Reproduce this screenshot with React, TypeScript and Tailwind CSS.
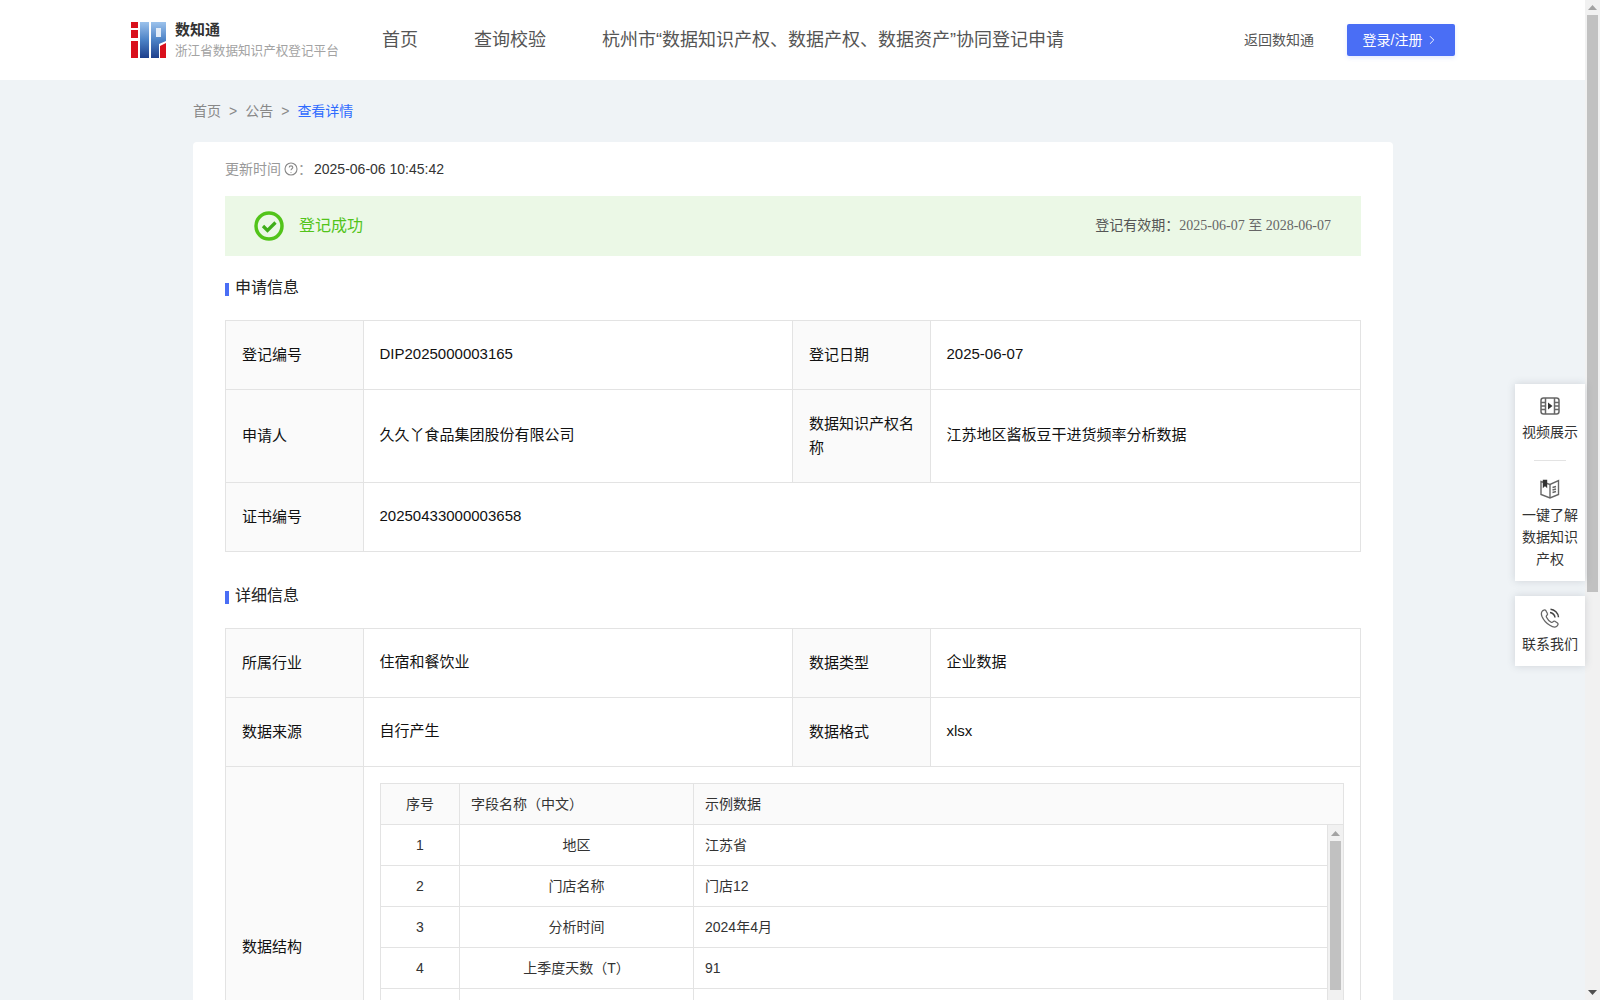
import type { ReactNode } from "react";
import { ChevronRight } from "lucide-react";

const font = "font-['Liberation_Sans','Noto_Sans_CJK_SC',sans-serif]";

function Logo() {
  return (
    <svg width="35" height="36" viewBox="0 0 35 36" className="shrink-0">
      <defs>
        <linearGradient id="logoBlue" x1="0" y1="0" x2="0" y2="1">
          <stop offset="0" stopColor="#9cc2ec" />
          <stop offset="0.5" stopColor="#4c82c6" />
          <stop offset="1" stopColor="#1d3f8c" />
        </linearGradient>
      </defs>
      <rect x="0" y="0" width="7" height="6" fill="#d9101c" />
      <rect x="0" y="8" width="7" height="8" fill="#d9101c" />
      <rect x="0" y="19" width="7" height="17" fill="#d9101c" />
      <rect x="9" y="0" width="9" height="36" fill="url(#logoBlue)" />
      <path d="M20 0h15v19l-7 3v14h-8z" fill="url(#logoBlue)" />
      <path d="M25 6h5v9h-5z" fill="#e2ecf8" />
      <path d="M29 36V24l6-3v15z" fill="#d9101c" />
    </svg>
  );
}

function SectionTitle({ children }: { children: string }) {
  return (
    <div className="flex items-center gap-[6px] text-base leading-[22px] text-[#222]">
      <span className="mt-[3px] h-[13px] w-1 bg-[#4a6ef5]" />
      <span className="mt-px">{children}</span>
    </div>
  );
}

function Label({ children }: { children: string }) {
  return (
    <div className="flex items-center border-r border-[#e3e3e3] bg-[#fafafa] px-4 pb-px text-[15px] leading-6 text-[#111]">
      {children}
    </div>
  );
}

function Value({ children }: { children: string }) {
  return (
    <div className="flex items-center border-r border-[#e3e3e3] px-[15.5px] pb-px text-[15px] text-[#111] last:border-r-0">
      {children}
    </div>
  );
}

const cols = "grid grid-cols-[138px_429px_138px_1fr]";

const fields = [
  ["1", "地区", "江苏省"],
  ["2", "门店名称", "门店12"],
  ["3", "分析时间", "2024年4月"],
  ["4", "上季度天数（T）", "91"],
  ["", "", ""],
];

function ScrollArrow({ up }: { up?: boolean }) {
  return (
    <svg width="9" height="5" viewBox="0 0 9 5" className={up ? "" : "rotate-180"}>
      <path d="M4.500 0 9 5H0z" fill={up ? "#a3a3a3" : "#505050"} />
    </svg>
  );
}

function SampleTable() {
  return (
    <div className="border border-[#e3e3e3] text-sm text-[#333]">
      <div className="grid h-[41px] grid-cols-[79px_234px_1fr] items-stretch border-b border-[#e3e3e3] bg-[#fafafa]">
        <div className="flex items-center justify-center border-r border-[#e3e3e3]">序号</div>
        <div className="flex items-center border-r border-[#e3e3e3] px-[11px]">字段名称（中文）</div>
        <div className="flex items-center px-[11px]">示例数据</div>
      </div>
      <div className="flex">
        <div className="min-w-0 flex-1">
          {fields.map((f, i) => (
            <div key={i} className="grid h-[41px] grid-cols-[79px_234px_1fr] border-b border-r border-[#e3e3e3]">
              <div className="flex items-center justify-center border-r border-[#e3e3e3]">{f[0]}</div>
              <div className="flex items-center justify-center border-r border-[#e3e3e3]">{f[1]}</div>
              <div className="flex items-center px-[11px]">{f[2]}</div>
            </div>
          ))}
        </div>
        <div className="flex w-[15px] shrink-0 flex-col items-center bg-[#f1f1f1]">
          <div className="flex h-[16px] items-center justify-center">
            <ScrollArrow up />
          </div>
          <div className="h-[149px] w-[11px] bg-[#c1c1c1]" />
        </div>
      </div>
    </div>
  );
}

function SideItem({ icon, children }: { icon: ReactNode; children: ReactNode }) {
  return (
    <div className="flex flex-col items-center text-sm leading-[22px] text-[#333]">
      {icon}
      <div className="mt-[5px] w-[58px] text-center">{children}</div>
    </div>
  );
}

function SideBar() {
  return (
    <div className="absolute left-[1515px] top-[384px] flex w-[70px] flex-col gap-[15px]">
      <div className="flex h-[197px] flex-col items-center bg-white pt-[12px] shadow-[0_0_8px_rgba(60,70,90,0.18)]">
        <SideItem
          icon={
            <svg width="20" height="20" viewBox="0 0 20 20" fill="none" stroke="#666" strokeWidth="1.5">
              <rect x="1" y="2" width="18" height="16" rx="2.500" />
              <path d="M5.500 2v16M14.500 2v16M1 6.500h4.500M1 10h4.500M1 13.500h4.500M14.500 6.500H19M14.500 10H19M14.500 13.500H19" />
              <path d="M8 6.500 12.500 10 8 13.500z" fill="#333" stroke="none" />
            </svg>
          }
        >
          视频展示
        </SideItem>
        <div className="mt-[17px] h-px w-8 bg-[#e3e3e3]" />
        <div className="mt-[18px]">
          <SideItem
            icon={
              <svg width="20" height="20" viewBox="0 0 20 20" fill="none" stroke="#666" strokeWidth="1.4">
                <path d="M1 2.500 10 5.500 18.500 1.500V15.500L10 19 1 15.500z" />
                <path d="M10 5.500V19" />
                <path d="M3.500 1.500h3v6L5 6 3.500 7.500z" fill="#333" stroke="#333" />
                <path d="M12.500 8.500l3.500-1M12.500 11l3.500-1M12.500 13.500l3.500-1" />
              </svg>
            }
          >
            一键了解数据知识产权
          </SideItem>
        </div>
      </div>
      <div className="flex h-[70px] flex-col items-center bg-white pt-[12px] shadow-[0_0_8px_rgba(60,70,90,0.18)]">
        <SideItem
          icon={
            <svg width="20" height="20" viewBox="0 0 20 20" fill="none" stroke="#666" strokeWidth="1.3">
              <path d="M2 3.500C3 2 5 1.500 5.800 2.500l1.600 3c.4.7 0 1.300-.7 1.900-.6.5-.6 1-.2 1.800 1 2 2.600 3.800 4.600 5 .7.400 1.300.300 1.800-.3.600-.7 1.300-1 2-.6l2.600 1.700c1 .7.500 2.500-1 3.500-1.500 1-4 .5-6.700-1.200C6.500 15.300 3.500 12 2 8.500 1.200 6.500 1.300 4.600 2 3.500z" />
              <path d="M10 4.500c2.500.2 4.800 2.500 5 5M10.500 1.200c4 .2 7.800 4 8 8" stroke="#444" strokeWidth="1.500" />
            </svg>
          }
        >
          联系我们
        </SideItem>
      </div>
    </div>
  );
}

function PageScrollbar() {
  return (
    <div className="flex w-[15px] shrink-0 flex-col items-center justify-between bg-[#f1f1f1]">
      <div className="flex w-full flex-col items-center">
        <div className="flex h-[15px] items-center justify-center">
          <ScrollArrow up />
        </div>
        <div className="h-[577px] w-[11px] bg-[#c1c1c1]" />
      </div>
      <div className="flex h-[15px] items-center justify-center">
        <ScrollArrow />
      </div>
    </div>
  );
}

export default function App() {
  return (
    <div className={`relative flex h-[1000px] w-[1600px] overflow-hidden bg-[#eff3f6] ${font}`}>
      <div className="min-w-0 flex-1">
        <header className="flex h-20 items-center bg-white pl-[131px] pr-[130px]">
          <Logo />
          <div className="ml-[9px] w-[207px] shrink-0">
            <div className="text-[15px] font-bold leading-5 text-[#333]">数知通</div>
            <div className="mt-px text-[12.6px] leading-5 text-[#a3a3a3]">浙江省数据知识产权登记平台</div>
          </div>
          <nav className="flex gap-14 text-lg text-[#555]">
            <span>首页</span>
            <span>查询校验</span>
            <span>杭州市“数据知识产权、数据产权、数据资产”协同登记申请</span>
          </nav>
          <div className="ml-auto flex items-center gap-[33px]">
            <span className="text-sm text-[#555]">返回数知通</span>
            <button
              type="button"
              className="flex h-8 w-[108px] items-center justify-center gap-[3px] rounded-[2px] bg-[#4a6ef5] text-sm text-white shadow-[0_2px_4px_rgba(74,110,245,0.15)]"
            >
              登录/注册
              <ChevronRight size={14} strokeWidth={1.6} />
            </button>
          </div>
        </header>

        <main className="ml-[193px] w-[1200px]">
          <div className="flex h-[62px] items-center gap-[8px] pb-[1px] text-sm text-[#888]">
            <span>首页</span>
            <span>&gt;</span>
            <span>公告</span>
            <span>&gt;</span>
            <span className="text-[#2f6bff]">查看详情</span>
          </div>

          <div className="rounded-t-[4px] bg-white px-8 pt-4 pb-8">
            <div className="flex h-[22px] items-center text-sm">
              <span className="text-[#999]">更新时间</span>
              <svg width="14" height="14" viewBox="0 0 14 14" fill="none" className="ml-[3px]">
                <circle cx="7" cy="7" r="6" stroke="#888" strokeWidth="1.100" />
                <path d="M5.200 5.600c0-1 .8-1.700 1.800-1.700s1.800.7 1.800 1.600c0 1.200-1.800 1.300-1.800 2.700M7 10.100v.6" stroke="#888" strokeWidth="1.100" />
              </svg>
              <span className="text-[#999]">：</span>
              <span className="ml-[2px] text-[#333]">2025-06-06 10:45:42</span>
            </div>

            <div className="mt-[16px] flex h-[60px] items-center justify-between bg-[#ebf8e6] pl-[29px] pr-[30px]">
              <div className="flex items-center gap-[15px] text-base text-[#52c41a]">
                <svg width="30" height="30" viewBox="0 0 30 30" fill="none">
                  <circle cx="15" cy="15" r="13" stroke="#52c41a" strokeWidth="3.500" />
                  <path d="M9 15l4.500 4.500L21.500 11.500" stroke="#3fae18" strokeWidth="3.200" />
                </svg>
                登记成功
              </div>
              <div className="pb-[2px] text-sm text-[#555]">
                登记有效期：
                <span className="font-['Liberation_Serif','Noto_Sans_CJK_SC',serif] text-[#666]">2025-06-07 至 2028-06-07</span>
              </div>
            </div>

            <div className="mt-[20px]">
              <SectionTitle>申请信息</SectionTitle>
            </div>
            <div className="mt-[21px] border border-[#e3e3e3]">
              <div className={`${cols} h-[69px] border-b border-[#e3e3e3]`}>
                <Label>登记编号</Label>
                <Value>DIP2025000003165</Value>
                <Label>登记日期</Label>
                <Value>2025-06-07</Value>
              </div>
              <div className={`${cols} h-[93px] border-b border-[#e3e3e3]`}>
                <Label>申请人</Label>
                <Value>久久丫食品集团股份有限公司</Value>
                <Label>数据知识产权名称</Label>
                <Value>江苏地区酱板豆干进货频率分析数据</Value>
              </div>
              <div className="grid h-[68px] grid-cols-[138px_1fr]">
                <Label>证书编号</Label>
                <Value>20250433000003658</Value>
              </div>
            </div>

            <div className="mt-[32px]">
              <SectionTitle>详细信息</SectionTitle>
            </div>
            <div className="mt-[21px] border border-[#e3e3e3]">
              <div className={`${cols} h-[69px] border-b border-[#e3e3e3]`}>
                <Label>所属行业</Label>
                <Value>住宿和餐饮业</Value>
                <Label>数据类型</Label>
                <Value>企业数据</Value>
              </div>
              <div className={`${cols} h-[69px] border-b border-[#e3e3e3]`}>
                <Label>数据来源</Label>
                <Value>自行产生</Value>
                <Label>数据格式</Label>
                <Value>xlsx</Value>
              </div>
              <div className="grid h-[360px] grid-cols-[138px_1fr]">
                <Label>数据结构</Label>
                <div className="px-4 pt-4">
                  <SampleTable />
                </div>
              </div>
            </div>
          </div>
        </main>
      </div>
      <PageScrollbar />
      <SideBar />
    </div>
  );
}
